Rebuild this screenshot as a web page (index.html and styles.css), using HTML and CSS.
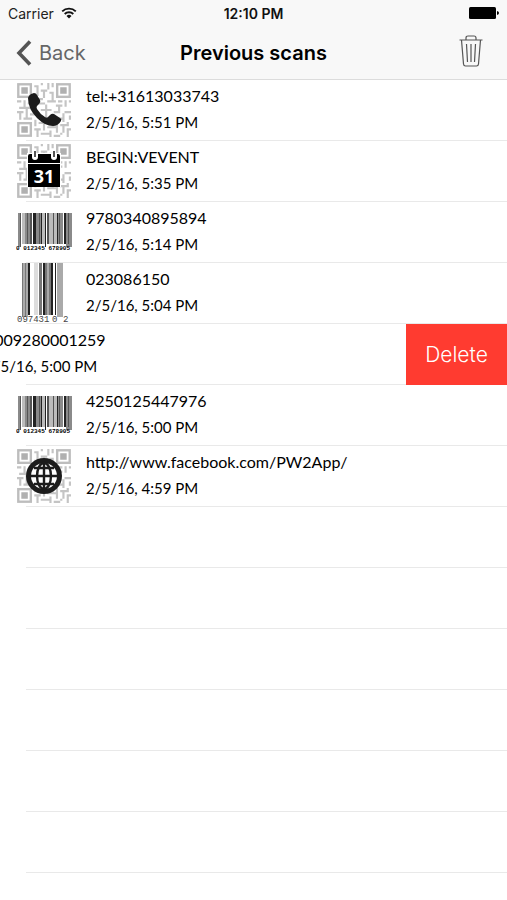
FILE: index.html
```
<!DOCTYPE html>
<html lang="en">
<head>
    <meta charset="utf-8">
    <meta name="viewport" content="width=device-width, initial-scale=1">
    <title>Previous scans</title>
    <link rel="stylesheet" href="styles.css">
</head>
<body>
    <!-- shared drawings -->
    <svg class="defs" aria-hidden="true">
        <symbol id="qr" viewBox="0 0 25 25">
            <g fill="none" stroke="#bdbdbd" stroke-width="1.1">
                <rect x=".6" y=".6" width="5.8" height="5.8"/>
                <rect x="18.6" y=".6" width="5.8" height="5.8"/>
                <rect x=".6" y="18.6" width="5.8" height="5.8"/>
            </g>
            <path fill="#b0b0b0" d="M2 2h3v3h-3zM20 2h3v3h-3zM2 20h3v3h-3z"/>
            <path fill="none" stroke="#c4c4c4" d="M8 1.5h2M11 .5h1M14.500 0v3M16.500 0v2M9.500 2v3M11 3.500h3M8 5.500h2M12.500 4v3M15 4.500h2M16.500 5v3M9 7.500h3M14 8.500h4M0 8.500h2M3.500 8v3M5 9.500h4M1 11.500h5M0 13.500h3M4.500 12v4M1.500 14v3M6 14.500h2M3 16.500h4M8.500 10v5M10 9.500h3M11 12.500h5M13.500 10v6M19 8.500h2M22.500 8v3M24 8.500h1M18 10.500h3M19.500 11v3M22 13.500h3M17 13.500h2M21.500 14v4M24.500 15v2M18 16.500h3M16.500 15v6M8.500 17v3M10 18.500h3M8 21.500h3M9.500 22v3M11 23.500h4M12.500 19v3M14 20.500h5M15.500 22v3M17 24.500h3M18.500 18v5M20 19.500h3M21.500 20v3M23 21.500h2M23.500 22v3M20 23.500h1M14.500 16v3M23.500 18v2"/>
        </symbol>
        <symbol id="ean" viewBox="0 0 57 40">
            <path fill="#8a8a8a" d="M2 1h2v34h-2zM9 1h7v31h-7zM20 1h6v31h-6zM42 1h5v31h-5zM50 1h6v34h-6z"/>
            <path fill="#bcbcbc" d="M6 1h3v31h-3zM26 1h3v31h-3zM33 1h9v31h-9z"/>
            <path fill="#555" d="M4 1h1v34h-1zM11 1h1v31h-1zM14 1h2v31h-2zM23 1h1v31h-1zM31 1h2v31h-2zM37 1h1v31h-1zM43 1h1v31h-1zM52 1h1v31h-1z"/>
            <path fill="#222" d="M17 1h3v31h-3zM25 1h1v31h-1zM29 1h1v34h-1zM41 1h1v31h-1zM48 1h2v31h-2z"/>
            <text x="0" y="38" class="code-digits">0 012345 678905</text>
        </symbol>
    </svg>

    <header class="top">
        <div class="status">
            <span class="carrier">Carrier
                <svg class="wifi" viewBox="0 0 16 12" aria-hidden="true">
                    <path d="M1.200 4.400a9.800 9.800 0 0 1 13.600 0M3.700 7a6.200 6.200 0 0 1 8.600 0" fill="none" stroke="#111" stroke-width="1.900"/>
                    <path d="M8 11.500L5.500 9a3.600 3.600 0 0 1 5 0z" fill="#111"/>
                </svg>
            </span>
            <span class="clock">12:10 PM</span>
            <svg class="battery" viewBox="0 0 30 12" aria-hidden="true">
                <rect width="27" height="12" rx="1.500"/>
                <path d="M28 4q2 .5 2 2t-2 2z"/>
            </svg>
        </div>
        <nav class="navbar">
            <a class="back" href="#">
                <svg class="chevron" viewBox="0 0 16 26" aria-hidden="true"><path d="M14 1.500L3 13l11 11.500" fill="none" stroke="#555" stroke-width="3.600"/></svg>
                Back
            </a>
            <h1>Previous scans</h1>
            <button class="trash" type="button" aria-label="Delete all">
                <svg viewBox="0 0 24 32" aria-hidden="true">
                    <path d="M.5 5h23M7 5V3q0-2 2-2h6q2 0 2 2v2M2.500 5l2 24q.2 2 2 2h11q1.800 0 2-2l2-24M7.500 9l1 18M12 9v18M16.500 9l-1 18" fill="none" stroke="#555" stroke-width="1.200"/>
                </svg>
            </button>
        </nav>
    </header>

    <ul class="scans">
        <li class="row">
            <div class="scan">
                <svg class="thumb" viewBox="0 0 57 61" aria-hidden="true">
                    <use href="#qr" x="1" y="3" width="54" height="54"/>
                    <path fill="#1c1c1c" d="M12 18q1-4 6-5 2 0 3 2l3 5q1 2-1 4l-2 2q-1 1 0 3 3 5 8 8 2 1 3 0l2-2q2-2 4-1l6 4q2 1 1 3-3 5-8 5-8 0-16-8-9-9-9-20z"/>
                </svg>
                <div class="info"><span class="code">tel:+31613033743</span><span class="date">2/5/16, 5:51 PM</span></div>
            </div>
        </li>
        <li class="row">
            <div class="scan">
                <svg class="thumb" viewBox="0 0 57 61" aria-hidden="true">
                    <use href="#qr" x="1" y="3" width="54" height="54"/>
                    <path fill="#fff" d="M11 12h34v34H11z"/>
                    <path d="M12 15q0-2 2-2h2v3q0 3 3 3t3-3v-3h13v3q0 3 3 3t3-3v-3h1q2 0 2 2v7H12zM12 23h32v23H12z"/>
                    <path d="M19 10v6M38 10v6" fill="none" stroke="#555" stroke-width="2"/>
                    <text x="28" y="42" class="day">31</text>
                </svg>
                <div class="info"><span class="code">BEGIN:VEVENT</span><span class="date">2/5/16, 5:35 PM</span></div>
            </div>
        </li>
        <li class="row">
            <div class="scan">
                <svg class="thumb" viewBox="0 0 57 61" aria-hidden="true"><use href="#ean" x="0" y="10" width="57" height="40"/></svg>
                <div class="info"><span class="code">9780340895894</span><span class="date">2/5/16, 5:14 PM</span></div>
            </div>
        </li>
        <li class="row">
            <div class="scan">
                <svg class="thumb" viewBox="0 0 57 61" aria-hidden="true">
                    <path fill="#aaa" d="M6 0h6v54h-6zM27 0h7v52h-7zM41 0h6v54h-6z"/>
                    <path fill="#ddd" d="M18 0h4v52h-4z"/>
                    <path fill="#777" d="M6 0h1v54h-1zM9 0h1v54h-1zM23 0h3v52h-3zM29 0h2v52h-2zM33 0h2v52h-2z"/>
                    <path fill="#222" d="M12 0h2v52h-2zM27 0h2v52h-2zM35 0h2v52h-2zM39 0h1v52h-1z"/>
                    <text x="1" y="59" class="upc-digits">097431</text>
                    <text x="36" y="59" class="upc-digits">0</text>
                    <text x="47" y="59" class="upc-digits">2</text>
                </svg>
                <div class="info"><span class="code">023086150</span><span class="date">2/5/16, 5:04 PM</span></div>
            </div>
        </li>
        <li class="row swiped">
            <div class="scan">
                <svg class="thumb" viewBox="0 0 57 61" aria-hidden="true"></svg>
                <div class="info"><span class="code">5009280001259</span><span class="date">2/5/16, 5:00 PM</span></div>
            </div>
            <button class="delete" type="button">Delete</button>
        </li>
        <li class="row">
            <div class="scan">
                <svg class="thumb" viewBox="0 0 57 61" aria-hidden="true"><use href="#ean" x="0" y="10" width="57" height="40"/></svg>
                <div class="info"><span class="code">4250125447976</span><span class="date">2/5/16, 5:00 PM</span></div>
            </div>
        </li>
        <li class="row">
            <div class="scan">
                <svg class="thumb" viewBox="0 0 57 61" aria-hidden="true">
                    <use href="#qr" x="1" y="3" width="54" height="54"/>
                    <circle cx="28" cy="30" r="18" fill="#1c1c1c"/>
                    <circle cx="28" cy="30" r="13" fill="#fff"/>
                    <path d="M28 17v26M14 30h28M18 22h20M18 38h20" fill="none" stroke="#1c1c1c" stroke-width="2.400"/>
                    <ellipse cx="28" cy="30" rx="7" ry="13" fill="none" stroke="#1c1c1c" stroke-width="2.400"/>
                </svg>
                <div class="info"><span class="code">http://www.facebook.com/PW2App/</span><span class="date">2/5/16, 4:59 PM</span></div>
            </div>
        </li>
        <li class="row"></li>
        <li class="row"></li>
        <li class="row"></li>
        <li class="row"></li>
        <li class="row"></li>
        <li class="row"></li>
    </ul>
</body>
</html>
```
FILE: styles.css
```
* {
    box-sizing: border-box;
}
body {
    margin: 0;
    background-color: #fff;
    color: #000;
    font-family: Inter, "Liberation Sans", sans-serif;
    overflow-x: hidden;
}
button {
    border: none;
    padding: 0;
    font-family: inherit;
}
.defs {
    display: block;
    width: 0;
    height: 0;
}
.top {
    background-color: #f8f8f8;
    border-bottom: 1px solid #dcdcdc;
}
.status {
    display: grid;
    grid-template-columns: 1fr auto 1fr;
    align-items: center;
    height: 26px;
    padding: 0 8px;
    font-size: 14px;
    color: #222;
}
.carrier {
    display: flex;
    align-items: center;
    gap: 7px;
}
.wifi {
    width: 16px;
    height: 12px;
}
.clock {
    color: #111;
    font-weight: 600;
}
.battery {
    justify-self: end;
    width: 30px;
    height: 12px;
}
.navbar {
    display: grid;
    grid-template-columns: 1fr auto 1fr;
    align-items: center;
    height: 53px;
    padding: 0 16px;
}
.back {
    display: flex;
    align-items: center;
    gap: 7px;
    color: #666;
    font-size: 20px;
    text-decoration: none;
}
.chevron {
    width: 16px;
    height: 26px;
}
h1 {
    margin: 0;
    font-size: 20px;
    font-weight: 600;
}
.trash {
    justify-self: end;
    margin: 0 8px 3px 0;
    background: none;
}
.trash svg {
    display: block;
    width: 24px;
    height: 32px;
}
.scans {
    margin: 0;
    padding: 0;
    list-style: none;
}
.row {
    display: flex;
    height: 61px;
    background: linear-gradient(#e9e9e9, #e9e9e9) 26px 100% / 100% 1px no-repeat;
}
.scan {
    display: flex;
    flex: none;
    gap: 13px;
    width: 100%;
    padding-left: 16px;
}
.thumb {
    flex: none;
    width: 57px;
    height: 61px;
}
.info {
    display: flex;
    flex-direction: column;
    gap: 6px;
    padding-top: 6px;
    font-family: Lato, sans-serif;
    line-height: 20px;
}
.code {
    font-size: 16px;
}
.date {
    font-size: 15px;
}
.swiped {
    overflow: hidden;
}
.swiped .scan {
    margin-left: -101px;
}
.delete {
    flex: none;
    width: 101px;
    background-color: #ff3b30;
    color: #fff;
    font-size: 21px;
    font-weight: 300;
}
.code-digits {
    font: bold 6px "Liberation Mono", monospace;
}
.upc-digits {
    font: 9px "Liberation Mono", monospace;
    fill: #444;
}
.day {
    font: bold 18px "Open Sans", sans-serif;
    fill: #fff;
    text-anchor: middle;
}
```
